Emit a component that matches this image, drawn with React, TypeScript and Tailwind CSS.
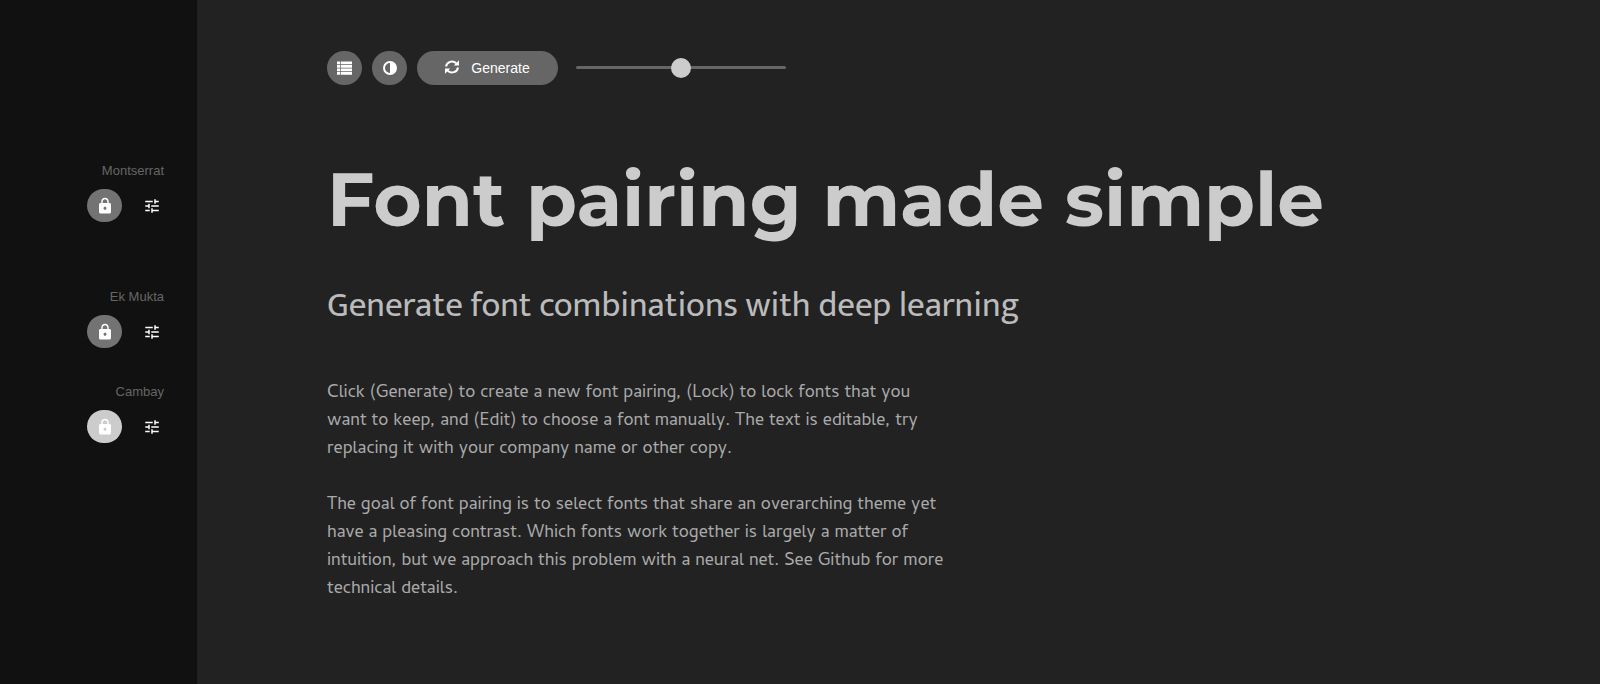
import { useState } from "react";
import type { ReactNode } from "react";
import { MdLock, MdTune } from "react-icons/md";

type FontRow = { name: string; locked: boolean; spacing: string };

const rows: FontRow[] = [
  { name: "Montserrat", locked: false, spacing: "mb-[67px]" },
  { name: "Ek Mukta", locked: false, spacing: "mb-9" },
  { name: "Cambay", locked: true, spacing: "" },
];

function ListIcon() {
  return (
    <svg width="15" height="14" viewBox="0 0 15 14" fill="currentColor" aria-hidden="true">
      <path d="M0 .5h3v2.700H0zM3.700 .5H15v2.700H3.700zM0 4h3v2.700H0zM3.700 4H15v2.700H3.700zM0 7.500h3v2.700H0zM3.700 7.500H15v2.700H3.700zM0 11h3v2.700H0zM3.700 11H15v2.700H3.700z" />
    </svg>
  );
}

function ContrastIcon() {
  return (
    <svg width="14" height="14" viewBox="0 0 14 14" aria-hidden="true">
      <circle cx="7" cy="7" r="6" fill="none" stroke="currentColor" strokeWidth="2" />
      <path d="M7 1a6 6 0 0 1 0 12z" fill="currentColor" />
    </svg>
  );
}

function RefreshIcon() {
  return (
    <svg width="14" height="16" viewBox="0 0 14 16" aria-hidden="true">
      <path d="M1 6.500A6 5.800 0 0 1 11.300 3.400M13 7.500A6 5.800 0 0 1 2.700 10.600" fill="none" stroke="currentColor" strokeWidth="2" />
      <path d="M14 .3v5.200H8.800zM0 13.700V8.500h5.200z" fill="currentColor" />
    </svg>
  );
}

function RoundButton({ label, children }: { label: string; children: ReactNode }) {
  return (
    <button type="button" aria-label={label} className="flex h-[34px] w-[35px] items-center justify-center rounded-full bg-[#666] text-white">
      {children}
    </button>
  );
}

function Sidebar() {
  return (
    <aside className="flex w-[197px] shrink-0 flex-col items-end bg-[#111] pt-[163px] pr-[33px]">
      {rows.map((row) => (
        <section key={row.name} className={`flex flex-col items-end gap-[10px] ${row.spacing}`}>
          <h2 className="text-[13px] leading-4 text-[#666]">{row.name}</h2>
          <div className="flex items-center gap-[21px] pr-[3px]">
            <button
              type="button"
              aria-label={`Lock ${row.name}`}
              aria-pressed={row.locked}
              className={`flex h-[33px] w-[35px] items-center justify-center rounded-full text-white ${row.locked ? "bg-[#ccc]" : "bg-[#737373]"}`}
            >
              <MdLock size={18} />
            </button>
            <button type="button" aria-label={`Edit ${row.name}`} className="text-white">
              <MdTune size={18} />
            </button>
          </div>
        </section>
      ))}
    </aside>
  );
}

function Toolbar() {
  const [contrast, setContrast] = useState(50);
  return (
    <div className="flex items-start">
      <div className="flex gap-[10px]">
        <RoundButton label="Show list">
          <ListIcon />
        </RoundButton>
        <RoundButton label="Toggle colours">
          <ContrastIcon />
        </RoundButton>
        <button type="button" className="flex h-[34px] w-[141px] items-center justify-center gap-3 rounded-full bg-[#666] text-sm text-white">
          <RefreshIcon />
          Generate
        </button>
      </div>
      <input
        type="range"
        aria-label="Contrast"
        value={contrast}
        onChange={(e) => setContrast(Number(e.target.value))}
        className="mt-1.5 ml-[18px] h-5 w-[210px] appearance-none bg-transparent [&::-webkit-slider-runnable-track]:h-[3px] [&::-webkit-slider-runnable-track]:rounded-full [&::-webkit-slider-runnable-track]:bg-[#666] [&::-webkit-slider-thumb]:-mt-2 [&::-webkit-slider-thumb]:size-5 [&::-webkit-slider-thumb]:appearance-none [&::-webkit-slider-thumb]:rounded-full [&::-webkit-slider-thumb]:bg-[#ccc]"
      />
    </div>
  );
}

export default function App() {
  return (
    <div className="flex min-h-screen bg-[#222] font-['Liberation_Sans',Arial,sans-serif]">
      <Sidebar />
      <main className="min-w-0 flex-1 pt-[51px] pl-[130px]">
        <Toolbar />
        <h1 className="mt-[71px] font-['Montserrat','Inter',sans-serif] text-[74px] leading-[88px] font-bold whitespace-nowrap text-[#ccc]">
          Font pairing made simple
        </h1>
        <p className="mt-[38px] font-['Ek_Mukta','Open_Sans',sans-serif] text-[35px] leading-[48px] whitespace-nowrap text-[#bbb]">
          Generate font combinations with deep learning
        </p>
        <div className="mt-[50px] flex flex-col gap-7 font-['Cambay','Noto_Sans',sans-serif] text-[18px] leading-7 whitespace-nowrap text-[#aaa]">
          <p>
            Click (Generate) to create a new font pairing, (Lock) to lock fonts that you
            <br />
            want to keep, and (Edit) to choose a font manually. The text is editable, try
            <br />
            replacing it with your company name or other copy.
          </p>
          <p>
            The goal of font pairing is to select fonts that share an overarching theme yet
            <br />
            have a pleasing contrast. Which fonts work together is largely a matter of
            <br />
            intuition, but we approach this problem with a neural net. See Github for more
            <br />
            technical details.
          </p>
        </div>
      </main>
    </div>
  );
}
